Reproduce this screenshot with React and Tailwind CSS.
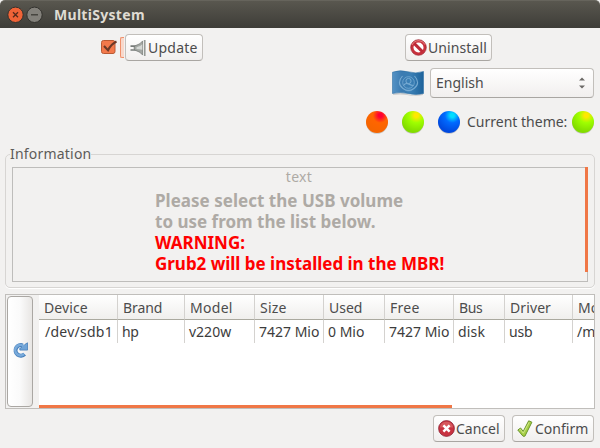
import React from "react";

const columns = [
  { head: "Device", cell: "/dev/sdb1", col: "w-[79px]", hp: "pl-[5px]", cp: "pl-[6px]", ht: "tracking-[0.1px]", ct: "tracking-[0.25px]" },
  { head: "Brand", cell: "hp", col: "w-[67px]", hp: "pl-[5px]", cp: "pl-[4px]", ht: "tracking-[-0.1px]", ct: "tracking-[-0.5px]" },
  { head: "Model", cell: "v220w", col: "w-[70px]", hp: "pl-[5px]", cp: "pl-[4px]", ht: "tracking-[0.3px]", ct: "tracking-[0px]" },
  { head: "Size", cell: "7427 Mio", col: "w-[69px]", hp: "pl-[5px]", cp: "pl-[4px]", ht: "tracking-[0.2px]", ct: "tracking-[0px]" },
  { head: "Used", cell: "0 Mio", col: "w-[61px]", hp: "pl-[5px]", cp: "pl-[4px]", ht: "tracking-[0px]", ct: "tracking-[0px]" },
  { head: "Free", cell: "7427 Mio", col: "w-[69px]", hp: "pl-[5px]", cp: "pl-[4px]", ht: "tracking-[0.3px]", ct: "tracking-[0px]" },
  { head: "Bus", cell: "disk", col: "w-[51px]", hp: "pl-[5px]", cp: "pl-[4px]", ht: "tracking-[-0.4px]", ct: "tracking-[0.2px]" },
  { head: "Driver", cell: "usb", col: "w-[68px]", hp: "pl-[5px]", cp: "pl-[4px]", ht: "tracking-[0.1px]", ct: "tracking-[-0.2px]" },
  { head: "Mount", cell: "/media", col: "w-[60px]", hp: "pl-[5px]", cp: "pl-[4px]", ht: "tracking-[0px]", ct: "tracking-[0px]" },
];

const buttonBase =
  "box-border flex shrink-0 items-center rounded-[4px] border border-[#c2bfbb] border-b-[#a9a6a2] bg-linear-to-b from-white to-[#f1efee] whitespace-nowrap";

function Ball({ id, edge, mid, light }) {
  return (
    <svg className="block h-[24px] w-[24px] shrink-0" viewBox="0 0 24 24">
      <defs>
        <radialGradient id={id} cx="0.65" cy="0.2" r="0.75">
          <stop offset="0" stopColor={light} />
          <stop offset="0.12" stopColor={light} />
          <stop offset="0.45" stopColor={mid} />
          <stop offset="1" stopColor={edge} />
        </radialGradient>
      </defs>
      <ellipse cx="12" cy="13" rx="10.8" ry="10.8" fill="#777" opacity="0.35" />
      <circle cx="12" cy="12" r="11" fill={`url(#${id})`} />
    </svg>
  );
}

function PlugIcon() {
  return (
    <svg className="block h-4 w-4 shrink-0" viewBox="0 0 16 16">
      <path d="M.5 6.2h5M.5 10h5" stroke="#777b78" strokeWidth="1.7" />
      <path d="M4 8Q4 5.4 7 5q3.5-.8 5-3.6h.8v13.2H12Q10.500 11.800 7 11 4 10.600 4 8Z" fill="#a3a7a3" stroke="#737773" strokeWidth=".8" />
      <path d="M6.500 7.2Q10 6.800 12.300 4.200v5.500Q9 9 6.500 9Z" fill="#d5d8d5" />
      <path d="M13.5 0v16" stroke="#e7e9e7" strokeWidth="1" />
      <path d="M14.8 0v16" stroke="#8b8f8b" strokeWidth="1.4" />
    </svg>
  );
}

function ForbiddenIcon() {
  return (
    <svg className="block h-[17px] w-[17px] shrink-0" viewBox="0 0 17 17">
      <circle cx="8.5" cy="8.5" r="7.8" fill="#c8303c" stroke="#9c2632" strokeWidth=".7" />
      <path d="M2 6Q4 1.600 9 1.700q4 0 6 4" stroke="#e98080" strokeWidth="1" fill="none" />
      <circle cx="8.5" cy="8.5" r="5" fill="#fff" />
      <path d="m4.4 4.6 8 8" stroke="#bd2937" strokeWidth="3" />
    </svg>
  );
}

function FlagIcon() {
  return (
    <svg className="block h-[26px] w-[32px] shrink-0" viewBox="0 0 32 26">
      <defs>
        <linearGradient id="flag" x1="0" x2="1">
          <stop offset="0" stopColor="#5492c5" />
          <stop offset=".3" stopColor="#3b7bb1" />
          <stop offset=".6" stopColor="#3a7fb5" />
          <stop offset="1" stopColor="#1d629a" />
        </linearGradient>
      </defs>
      <path d="M1 24q7-2 14 0 8 3 16-1v2q-8 2-16 0-7-1-14 0Z" fill="#999" opacity=".4" />
      <path d="M.5 2.200Q8-.5 16 1.800T31.500 1.500v22Q24 25.500 16 23.500T.5 23.500Z" fill="url(#flag)" stroke="#2f70a4" strokeWidth=".6" />
      <g fill="none" stroke="#83b4d9" opacity=".85">
        <circle cx="16.500" cy="12.500" r="5.800" strokeWidth=".8" />
        <circle cx="16.500" cy="11" r="2.600" strokeWidth="1" />
        <path d="M11.500 15.500q2-3 5-1.500t5 1.500" strokeWidth="1.2" />
        <path d="M10.500 6Q4 13 11 18.500q3 2.500 8 2M22.500 6q6.500 7-.5 12.500-3 2.500-8 2" strokeWidth="1.100" />
      </g>
    </svg>
  );
}

function RefreshIcon() {
  return (
    <svg className="block h-4 w-4" viewBox="0 0 16 16">
      <path d="M12.600 12.200A5.300 5.300 0 1 1 10.800 3.500" fill="none" stroke="#477fba" strokeWidth="4" />
      <path d="M15.500.8v7.300H7.800V6.200L10 5.300 12.800 2.500Z" fill="#70a4d7" stroke="#477fba" strokeWidth=".8" strokeLinejoin="round" />
      <path d="M12 12A5.200 5.200 0 1 1 11.800 4.200" fill="none" stroke="#78aadb" strokeWidth="2.500" />
    </svg>
  );
}

function CancelIcon() {
  return (
    <svg className="block h-[17px] w-[17px] shrink-0" viewBox="0 0 17 17">
      <circle cx="8.5" cy="8.5" r="7.9" fill="#c83240" stroke="#8d2637" strokeWidth=".8" />
      <path d="M1.8 7.5Q3 1.8 8.5 1.8t6.7 5.7Z" fill="#dc6868" opacity=".7" />
      <path d="m5.4 5.4 6.2 6.2m0-6.2-6.2 6.2" stroke="#fff" strokeWidth="2.5" />
    </svg>
  );
}

function ConfirmIcon() {
  return (
    <svg className="block h-[17px] w-[16px] shrink-0" viewBox="0 0 16 17">
      <path d="m.8 10 2.8-2 2.6 3.4L11.700.8l3.2 1.400-7 14H6Z" fill="#a6cf45" stroke="#6b942f" strokeWidth="1" strokeLinejoin="round" />
      <path d="m2.4 10 1-.6 2.9 3.8L12.200 2.200" stroke="#d2e98e" strokeWidth=".9" fill="none" />
    </svg>
  );
}

export default function App() {
  return (
    <div className="flex h-[448px] w-[600px] flex-col overflow-hidden bg-[#f2f1f0] font-['Noto_Sans','Open_Sans',sans-serif] text-[14px] leading-[20px] text-[#4c4c4c]">
      <header className="flex h-[28px] shrink-0 items-center rounded-t-[5px] border-t border-[#66645c] bg-linear-to-b from-[#59574f] to-[#3e3d38] pl-[7px]">
        <svg className="block h-[18px] w-[36px]" viewBox="0 0 36 18">
          <circle cx="8.5" cy="8.8" r="7.7" fill="#f06337" stroke="#32312d" />
          <path d="m6 6.3 5 5m0-5-5 5" stroke="#55291b" strokeWidth="1.3" />
          <circle cx="27.5" cy="8.8" r="7.7" fill="#83817b" stroke="#32312d" />
          <path d="M24 8.8h7" stroke="#3d3b36" strokeWidth="1.3" />
        </svg>
        <h1 className="ml-[11px] text-[14px] font-bold tracking-[0.3px] text-[#dfdbd2]">MultiSystem</h1>
      </header>

      <div className="mt-[6px] flex h-[27px] shrink-0 items-center">
        <svg className="ml-[100px] block h-[17px] w-[18px] shrink-0" viewBox="0 0 18 17">
          <rect x="1.5" y="1.500" width="13.5" height="13" rx="2" fill="#f3794b" stroke="#b95a34" />
          <path d="m4 7 4 4.200q3-6 8.500-8.700" fill="none" stroke="#6b3a28" strokeWidth="2.100" />
        </svg>
        <span className="ml-[2px] h-[21px] w-[4px] rounded-l-[2px] border border-r-0 border-[#f0916c] bg-[#f8d8cb]" />
        <button className={`${buttonBase} ml-[1px] h-[27px] w-[78px] pl-[4px]`}>
          <PlugIcon /><span className="ml-[2px] tracking-[0.25px]">Update</span>
        </button>
        <button className={`${buttonBase} ml-[202px] h-[27px] w-[87px] pl-[4px]`}>
          <ForbiddenIcon /><span className="ml-[1px] tracking-[0.1px]">Uninstall</span>
        </button>
      </div>

      <div className="mt-[7px] flex h-[30px] shrink-0 items-center justify-end pr-[6px]">
        <FlagIcon />
        <div className={`${buttonBase} ml-[6px] h-[30px] w-[164px] justify-between pr-[7px] pl-[5px]`}>
          <span className="tracking-[0px]">English</span>
          <svg className="h-[14px] w-[8px]" viewBox="0 0 8 14"><path d="M1 4.500h6L4 1.500Zm0 5h6L4 12.500Z" fill="#6b6966" /></svg>
        </div>
      </div>

      <div className="mt-[12px] flex h-[24px] shrink-0 items-center pl-[365px]">
        <Ball id="red" edge="#f66500" mid="#ff6500" light="#ff0033" />
        <span className="w-[12px]" />
        <Ball id="green" edge="#82dc00" mid="#9fff00" light="#ffe800" />
        <span className="w-[12px]" />
        <Ball id="blue" edge="#0049df" mid="#006aff" light="#00ddff" />
        <span className="ml-[6px] w-[104px] whitespace-nowrap tracking-[0px]">Current theme:</span>
        <Ball id="current" edge="#82dc00" mid="#9fff00" light="#ffe800" />
      </div>

      <fieldset className="mx-[5px] mt-[10px] h-[144px] shrink-0 rounded-[5px] border border-[#d7d5d3] px-[6px] shadow-[0_1px_0_#fff]">
        <legend className="ml-[-2px] h-[20px] leading-[20px] tracking-[0.2px] text-[#5d5b59]">Information</legend>
        <div className="mt-[3px] flex h-[115px] border border-[#bebdbb] text-[#aeaaa5]">
          <div className="flex min-w-0 flex-1 flex-col items-center">
            <div className="h-[22px] leading-[18px] tracking-[0.3px]">text</div>
            <div className="w-[288px] text-[17px] leading-[21px] font-bold whitespace-nowrap">
              <p className="tracking-[0.02px]">Please select the USB volume</p>
              <p className="tracking-[0px]">to use from the list below.</p>
              <p className="tracking-[0px] text-[#ff0000]">WARNING:</p>
              <p className="tracking-[-0.02px] text-[#ff0000]">Grub2 will be installed in the MBR!</p>
            </div>
          </div>
          <div className="-mt-px -mr-px h-[105px] w-[3px] bg-[#f07746]" />
        </div>
      </fieldset>

      <section className="mt-[6px] ml-[5px] flex h-[115px] w-[590px] shrink-0 border border-[#c0bebb]">
        <button className="mt-px ml-px flex h-[111px] w-[26px] shrink-0 items-center justify-center rounded-[4px] border border-[#aaa7a3] bg-linear-to-r from-white via-[#fafafa] to-[#e8e6e4] pb-[3px]">
          <RefreshIcon />
        </button>
        <div className="ml-[6px] flex min-w-0 flex-1 flex-col bg-white">
          <div className="flex shrink-0 overflow-hidden">
            {columns.map((c) => (
              <div key={c.head} className={`${c.col} shrink-0`}>
                <div className={`${c.hp} ${c.ht} h-[25px] border-r border-b border-r-[#d4d2cf] border-b-[#aaa99f] bg-linear-to-b from-white to-[#f0efed] leading-[25px]`}>{c.head}</div>
                <div className={`${c.cp} ${c.ct} h-[23px] border-r border-[#d4d2cf] leading-[24px] whitespace-nowrap text-[#3c3c3c]`}>{c.cell}</div>
              </div>
            ))}
          </div>
          <div className="mt-auto h-[3px] w-[413px] bg-[#f07746]" />
        </div>
      </section>

      <footer className="mt-[6px] flex shrink-0 justify-end gap-[7px] pr-[6px]">
        <button className={`${buttonBase} h-[27px] w-[72px] pl-[4px]`}>
          <CancelIcon /><span className="ml-[1px] tracking-[0px]">Cancel</span>
        </button>
        <button className={`${buttonBase} h-[27px] w-[82px] pl-[4px]`}>
          <ConfirmIcon /><span className="ml-[2px] tracking-[0px]">Confirm</span>
        </button>
      </footer>
    </div>
  );
}
